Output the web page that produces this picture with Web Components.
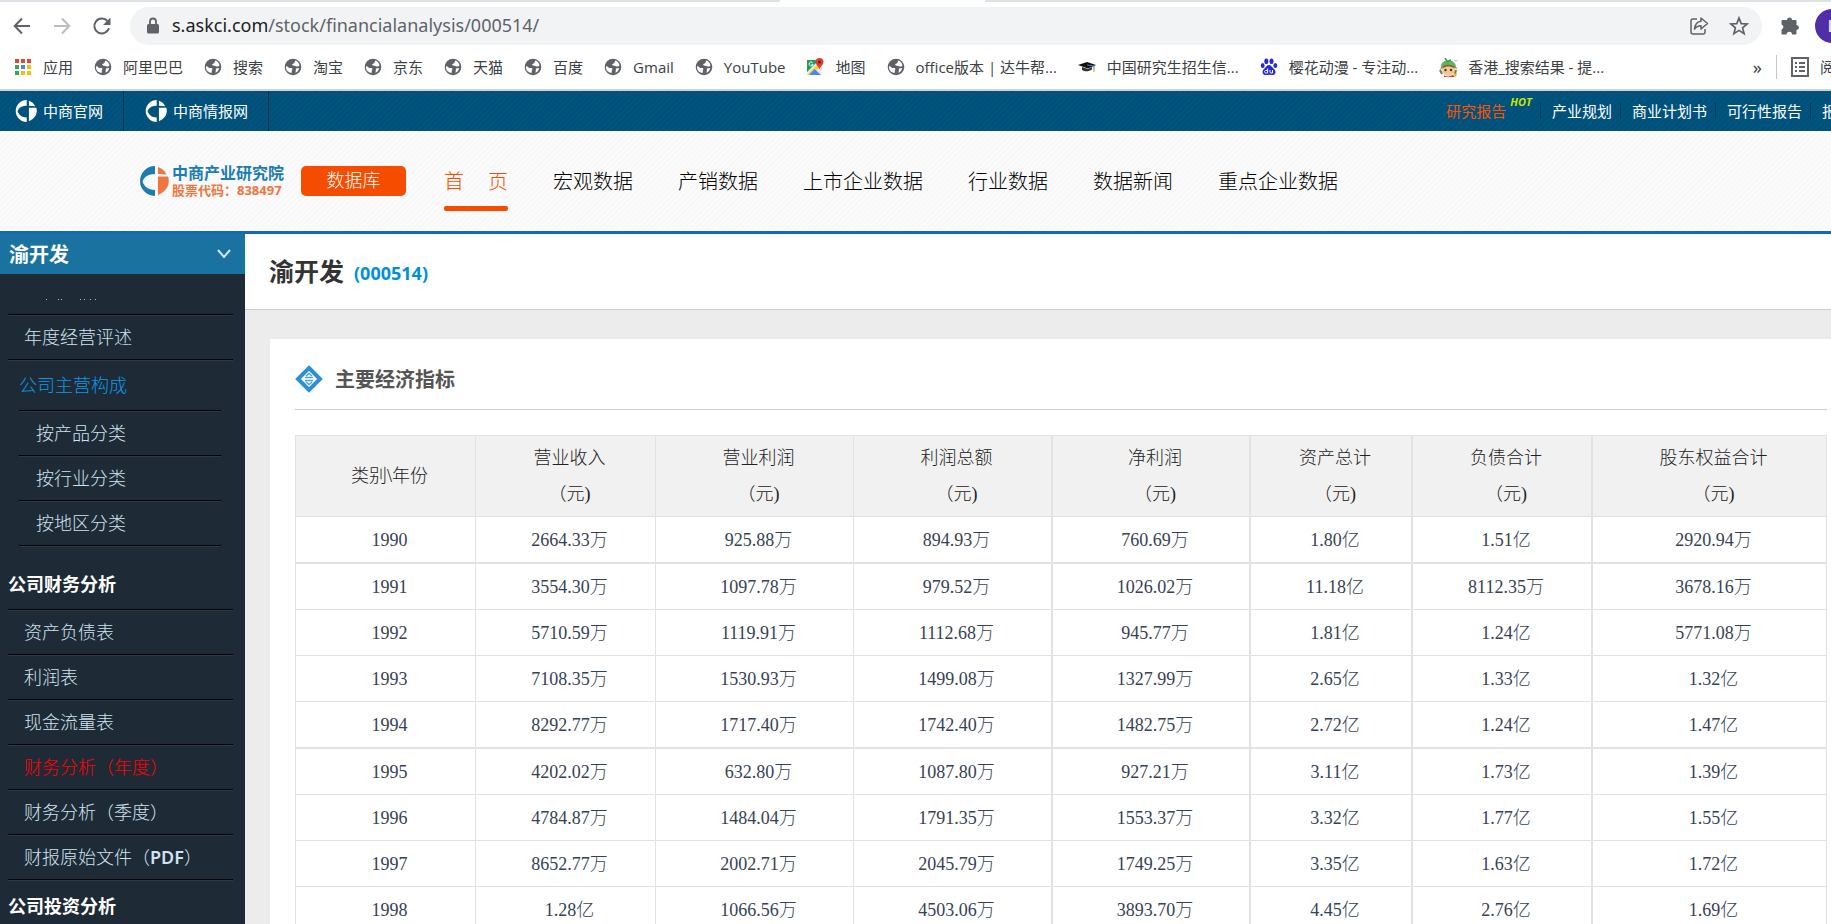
<!DOCTYPE html>
<html lang="zh-CN">
<head>
<meta charset="utf-8">
<title>渝开发（000514）财务分析</title>
<style>
html, body { margin: 0; height: 100%; }
body { font-family: "Noto Sans", "Noto Sans CJK SC", sans-serif; overflow: hidden; background: #ececec; }
</style>
</head>
<body>
<stock-page></stock-page>
<script>
const define = (name, html, setup) => {
  const template = document.createElement('template');
  template.innerHTML = html;
  customElements.define(name, class extends HTMLElement {
    connectedCallback() {
      if (this.shadowRoot) return;
      this.attachShadow({ mode: 'open' }).append(template.content.cloneNode(true));
      if (setup) setup(this, this.shadowRoot);
    }
  });
};

const icons = {
  globe: '<svg viewBox="0 0 18 18" width="18" height="18"><circle cx="9" cy="9" r="8.3" fill="#5f6368"/><path d="M2 8.2C3.4 8 4.5 9 5 10h2.6c1 .3 1 1.500.2 2v2.800C4 14.800 1.700 12 2 8.200ZM11.500 2.500c2 .8 3.600 2.600 4 5-.8 1.300-2.200 1.300-3.400.8-1-.6-2.700-.3-3.900-1.300 0-1.200.6-1.500 1.800-1.600.8-.4.500-2 1.500-2.900ZM12 10.500l3.200-.6c-.4 2.300-1.700 4-3.700 4.800Z" fill="#fff"/></svg>',
  apps: '<svg viewBox="0 0 18 18" width="18" height="18"><g fill="#ea4335"><path d="M1 1h4v4H1zM7 1h4v4H7zM13 1h4v4h-4z"/></g><path d="M1 7h4v4H1zM1 13h4v4H1z" fill="#34a853"/><path d="M7 7h4v4H7z" fill="#4285f4"/><path d="M13 7h4v4h-4zM7 13h4v4H7zM13 13h4v4h-4z" fill="#fbbc04"/></svg>',
  map: '<svg viewBox="0 0 18 18" width="18" height="18"><path d="M1 2h15v15H1z" fill="#e8eaed"/><path d="M1 2h12L1 14z" fill="#1e9d57"/><path d="M1 17 14 4l2 3-10 10z" fill="#fdd030"/><path d="m3 17 5.500-6L15 17z" fill="#4a89f3"/><path d="M13.500 0c2.400 0 4 1.700 4 3.900 0 2.500-3 4-4 7.600-1-3.600-4-5.100-4-7.600 0-2.200 1.600-3.900 4-3.900Z" fill="#e33b2e"/><circle cx="13.500" cy="4" r="1.500" fill="#8c1712"/><path d="M6.500 4.500a2 2 0 1 0 .6 1.800H5.400" fill="none" stroke="#fff"/></svg>',
  hat: '<svg viewBox="0 0 18 18" width="18" height="18"><path d="m0 7 9-3 9 3-8 3.500z" fill="#111"/><path d="M4 9v3c3 2 7 1.500 10-.5V9l-4 2z" fill="#333"/><path d="M9 7l7 1v4" fill="none" stroke="#3b82d0"/><path d="M16 11v3" stroke="#e8c34a" stroke-width="1.500"/></svg>',
  paw: '<svg viewBox="0 0 18 18" width="18" height="18" fill="#2529d8"><ellipse cx="6.300" cy="3.200" rx="2" ry="2.800"/><ellipse cx="11.500" cy="3.200" rx="2" ry="2.800"/><ellipse cx="2.700" cy="7.500" rx="1.900" ry="2.500"/><ellipse cx="15.300" cy="7.500" rx="1.900" ry="2.500"/><path d="M9 7c2 0 3 2 4.500 3.500 2 2 2.500 3.500 1.500 5.200-1.300 2-3.500 1-6 1s-4.700 1-6-1c-1-1.700-.5-3.200 1.500-5.200C6 9 7 7 9 7Z"/><path d="M7.600 10.500v4.500H6c-2 0-2-2.500 0-2.500h1.600M10 12v2q0 1 1 1h1.500v-3" fill="none" stroke="#fff"/></svg>',
  face: '<svg viewBox="0 0 20 20" width="20" height="20"><circle cx="9.500" cy="11.500" r="6.500" fill="#f0c796"/><path d="M2 9C2 4 6 2 9 3c4-1 7 1 8 5l1 3-3-1q-6-3-11 0l-3 2z" fill="#5fb45f"/><path d="m6 0 2.500 3.500L12 2" fill="none" stroke="#3c9d53" stroke-width="1.500"/><path d="M4 9q5-3 11 0" stroke="#b5482f" stroke-width="1.500" fill="none"/><circle cx="6.500" cy="12" r="1.200" fill="#553224"/><circle cx="12" cy="12" r="1.200" fill="#553224"/><path d="M1 12l2 4M17 12l-1 4" stroke="#9c6a3e" stroke-width="2"/><path d="M5 17.500q5 2 9-.5l2 2H5z" fill="#c83a2a"/><path d="m14 16 4-1-1 4z" fill="#e0b430"/><path d="m15.500 2 1.500 1.500L18.500 2" stroke="#f09a8a" fill="none"/></svg>'
};

const whiteMark = '<svg viewBox="0 0 30 30" width="22" height="22" fill="#fff"><path d="M16 0v8C9 8 5 11 3.500 15.500 5 20 9 24 16 24v6A15 15 0 0 1 16 0ZM19 1q6 2 8.500 7.500L19 8zM19 10.500h10q2 6-1 11-3 5-9 7.500z"/></svg>';

/* Browser toolbar: navigation buttons, address box, profile */
define('browser-toolbar', `
<style>
:host { display: block; background: #fff; }
.strip { height: 2px; display: grid; grid-template-columns: 780fr 205fr 846fr; }
.strip i { background: #dee1e6; } .strip i:nth-child(2) { background: #fff; }
.row { display: flex; align-items: center; height: 48px; box-sizing: border-box; padding: 0 0 0 12px; }
button { border: 0; background: none; padding: 0; width: 20px; height: 20px; margin-right: 20px; flex: none; }
svg { display: block; }
.omni { flex: 1; display: flex; align-items: center; height: 38px; margin-left: -2px; padding: 0 13px 0 16px; border-radius: 19px; background: #f1f3f4; }
.omni .url { flex: 1; font-size: 18px; line-height: 24px; color: #5f6368; margin-left: 12px; padding-bottom: 2px; }
.omni b { font-weight: 400; color: #202124; }
.omni button { margin: 0 0 0 20px; }
.row .ext { margin: 0 15px 0 18px; }
.row .avatar { width: 34px; height: 34px; border-radius: 50%; background: #512da8; color: #fff; font: 17px/34px "Noto Sans", sans-serif; margin: 0 -18px 0 0; }
</style>
<div class="strip"><i></i><i></i><i></i></div>
<div class="row">
<button aria-label="后退"><svg viewBox="0 0 20 20" width="20" height="20" fill="none" stroke="#5f6368" stroke-width="2"><path d="M18 10H3M10 2.500 2.700 10l7.300 7.500"/></svg></button>
<button aria-label="前进"><svg viewBox="0 0 20 20" width="20" height="20" fill="none" stroke="#babcbe" stroke-width="2"><path d="M2 10h15M10 2.500 17.300 10 10 17.500"/></svg></button>
<button aria-label="重新加载"><svg viewBox="0 0 20 20" width="20" height="20"><path d="M17 12.300A7.500 7.500 0 1 1 15.500 5" fill="none" stroke="#5f6368" stroke-width="2"/><path d="M18.500 1.500V9H11z" fill="#5f6368"/></svg></button>
<div class="omni">
<svg viewBox="0 0 14 18" width="14" height="18"><rect x="1" y="7" width="12" height="9.500" rx="1.500" fill="#5f6368"/><path d="M4 8V4.500a3 3 0 0 1 6 0V8" fill="none" stroke="#5f6368" stroke-width="1.800"/></svg>
<span class="url"><b>s.askci.com</b>/stock/financialanalysis/000514/</span>
<button aria-label="分享"><svg viewBox="0 0 20 20" width="20" height="20" fill="none" stroke="#5f6368" stroke-width="1.500" stroke-linejoin="round"><path d="M8 3H4a2 2 0 0 0-2 2v11a2 2 0 0 0 2 2h10a2 2 0 0 0 2-2v-3M12 2l6.500 5.500L12 13v-3.300c-3 0-5 1-6.500 3.500C6 8.500 8 5.500 12 5.200z"/></svg></button>
<button aria-label="收藏"><svg viewBox="0 0 20 20" width="20" height="20" fill="none" stroke="#5f6368" stroke-width="1.700"><path d="m10 2 2.200 5.600 6 .4-4.600 3.900 1.500 5.800L10 14.400l-5.100 3.300 1.500-5.800L1.800 8l6-.4z"/></svg></button>
</div>
<button class="ext" aria-label="扩展程序"><svg viewBox="0 0 20 20" width="20" height="20" fill="#5f6368"><path d="M7 4a2.500 2.500 0 0 1 5 0h3.500a1 1 0 0 1 1 1v4a2.500 2.500 0 0 1 0 5v3.500a1 1 0 0 1-1 1H12a2.700 2.700 0 0 0-5.400 0H2.500a1 1 0 0 1-1-1v-4a2.600 2.600 0 0 0 0-5V5a1 1 0 0 1 1-1z"/></svg></button>
<button class="avatar">L</button>
</div>`);

define('bookmark-link', `
<style>
:host { display: block; flex: none; }
a { display: flex; align-items: center; gap: 11px; color: #3c4043; text-decoration: none; font-size: 15px; line-height: 20px; white-space: nowrap; }
.i { width: 18px; height: 18px; display: grid; place-items: center; } svg { display: block; flex: none; }
</style><a href="#"><span class="i"></span><slot></slot></a>`, (el, root) => {
  root.querySelector('.i').innerHTML = icons[el.getAttribute('icon') || 'globe'];
});

define('bookmark-bar', `
<style>
:host { display: flex; align-items: center; gap: 21px; height: 34px; padding: 0 0 5px 14px; background: #fff; border-bottom: 2px solid #d2d3d4; overflow: hidden; font-family: "Open Sans", "Noto Sans CJK SC", sans-serif; }
.end { margin-left: auto; display: flex; align-items: center; gap: 14px; flex: none; margin-right: -19px; color: #3c4043; }
.end i { width: 1px; height: 24px; background: #c4c7ca; }
button { border: 0; background: none; padding: 0; font: 18px/20px "Noto Sans", sans-serif; color: #3c4043; }
.read { display: flex; align-items: center; gap: 11px; font: 15px/20px "Noto Sans", "Noto Sans CJK SC", sans-serif; }
</style>
<bookmark-link icon="apps">应用</bookmark-link><bookmark-link>阿里巴巴</bookmark-link><bookmark-link>搜索</bookmark-link><bookmark-link>淘宝</bookmark-link><bookmark-link>京东</bookmark-link><bookmark-link>天猫</bookmark-link><bookmark-link>百度</bookmark-link><bookmark-link>Gmail</bookmark-link><bookmark-link>YouTube</bookmark-link><bookmark-link icon="map">地图</bookmark-link><bookmark-link>office版本 | 达牛帮...</bookmark-link><bookmark-link icon="hat">中国研究生招生信...</bookmark-link><bookmark-link icon="paw">樱花动漫 - 专注动...</bookmark-link><bookmark-link icon="face">香港_搜索结果 - 提...</bookmark-link>
<div class="end"><button aria-label="更多书签">»</button><i></i><button class="read"><svg viewBox="0 0 18 20" width="18" height="20" fill="none" stroke="#5f6368" stroke-width="2"><path d="M1 1h16v18H1zM4 6h2M8 6h6M4 10h2M8 10h6M4 14h2M8 14h6"/></svg>阅读</button></div>`);

define('site-topbar', `
<style>
:host { display: flex; height: 40px; background: repeating-linear-gradient(135deg, #00507a 0 2px, #00547e 2px 4px); color: #fff; overflow: hidden; font-size: 15px; line-height: 38px; white-space: nowrap; }
a { color: inherit; text-decoration: none; }
.l a { display: flex; align-items: center; gap: 6px; padding: 0 20px 0 21px; border-right: 1px solid #00314c; }
.l a:first-child { padding-left: 15px; }
.l, .r { display: flex; }
.r { margin-left: auto; margin-right: -59px; align-items: center; line-height: 20px; flex: none; padding-bottom: 1px; }
.r a { padding: 0 8px 0 11px; border-left: 1px solid #003a59; height: 16px; display: flex; align-items: center; }
.r .hot { border: 0; color: #ff5200; }
sup { font: italic 700 11px/11px "Open Sans", sans-serif; color: #c8e600; margin: 0 0 18px 4px; }
</style>
<div class="l"><a href="#">${whiteMark}中商官网</a><a href="#">${whiteMark}中商情报网</a></div>
<nav class="r"><a class="hot" href="#">研究报告<sup>HOT</sup></a><a href="#">产业规划</a><a href="#">商业计划书</a><a href="#">可行性报告</a><a href="#">报告大厅</a></nav>`);

define('site-header', `
<style>
:host { display: flex; align-items: center; height: 100px; padding-left: 139px; background: repeating-linear-gradient(135deg, #f8f8f8 0 2px, #fbfbfb 2px 4px); border-bottom: 3px solid #0f6ab8; white-space: nowrap; }
a { text-decoration: none; color: #000; }
.logo { display: flex; align-items: center; gap: 3px; width: 162px; color: #1c7cb0; font: 700 16px/18px "Noto Sans CJK SC", sans-serif; }
.logo small { display: block; font: 700 13px/18px "Noto Sans", "Noto Sans CJK SC", sans-serif; color: #f07540; }
.db { width: 105px; height: 30px; box-sizing: border-box; border-radius: 5px; background: #f54c00; color: #fff; text-align: center; font-size: 18px; line-height: 28px; font-weight: 300; }
nav { display: flex; gap: 45px; margin-left: 38px; padding-top: 2px; font-size: 20px; line-height: 30px; }
nav a { position: relative; font-weight: 300; }
nav .on { color: #f54c00; display: flex; gap: 24px; }
nav .on::after { content: ""; position: absolute; left: 0; right: 0; top: 39px; height: 5px; border-radius: 2px; background: #f54c00; }
</style>
<a class="logo" href="#"><svg viewBox="0 0 30 30" width="30" height="30"><path d="M16 0v8C9 8 5 11 3.500 15.500 5 20 9 24 16 24v6A15 15 0 0 1 16 0Z" fill="#1c7cb0"/><path d="M19 1q6 2 8.500 7.500L19 8zM19 10.500h10q2 6-1 11-3 5-9 7.500z" fill="#f07540"/></svg><span>中商产业研究院<small>股票代码：838497</small></span></a>
<a class="db" href="#">数据库</a>
<nav><a class="on" href="#"><span>首</span><span>页</span></a><a href="#">宏观数据</a><a href="#">产销数据</a><a href="#">上市企业数据</a><a href="#">行业数据</a><a href="#">数据新闻</a><a href="#">重点企业数据</a></nav>`);

define('side-item', `
<style>
:host { display: block; height: 44px; margin: 0 12px 0 8px; border-bottom: 1px solid #000; box-shadow: 0 1px #2a3b49; }
a { display: block; padding-left: 16px; font-size: 18px; line-height: 44px; font-weight: 300; color: #cfe2f1; text-decoration: none; white-space: nowrap; }
::slotted(b) { font-weight: 600; }
:host([current]) a { color: #f00; }
:host([sub]) { margin: 0 24px 0 19px; } :host([sub]) a { padding-left: 17px; }
:host([group]) { margin: 0 24px 0 19px; height: 50px; } :host([group]) a { padding-left: 0; line-height: 50px; color: #0b98ea; }
</style><a href="#"><slot></slot></a>`);

define('side-nav', `
<style>
:host { display: block; background: #1e2b36; overflow: hidden; }
.top { display: flex; justify-content: space-between; align-items: center; width: 100%; height: 40px; border: 0; padding: 0 14px 0 9px; background: #1a72a0; color: #fff; font: 700 20px/38px "Noto Sans CJK SC", sans-serif; }
.cut { height: 40px; margin: 0 12px 0 8px; border-bottom: 1px solid #000; box-shadow: 0 1px #2a3b49; }
.cut svg { display: block; }
h3 { margin: 0; padding-left: 8px; font: 700 18px/24px "Noto Sans CJK SC", sans-serif; color: #fff; }
.a { padding: 25px 0 0; height: 38px; border-bottom: 1px solid #000; margin: 0 12px 0 8px; box-shadow: 0 1px #2a3b49; }
.b { padding-top: 13px; }
</style>
<button class="top">渝开发<svg viewBox="0 0 14 10" width="14" height="10" fill="none" stroke="#d5e8f2" stroke-width="2"><path d="m1 1 6 7 6-7"/></svg></button>
<div class="cut"><svg viewBox="0 0 100 40" width="100" height="40" fill="#a9bccb"><path d="M38 25h1v1h-1zM50 25h1v1h-1zM53 25h1v1h-1zM72 25h1v1h-1zM76 25h1v1h-1zM82 25h1v1h-1zM87 25h1v1h-1z"/></svg></div>
<side-item>年度经营评述</side-item><side-item group>公司主营构成</side-item><side-item sub>按产品分类</side-item><side-item sub>按行业分类</side-item><side-item sub>按地区分类</side-item>
<h3 class="a">公司财务分析</h3>
<side-item>资产负债表</side-item><side-item>利润表</side-item><side-item>现金流量表</side-item><side-item current>财务分析（年度）</side-item><side-item>财务分析（季度）</side-item><side-item>财报原始文件（<b>PDF</b>）</side-item>
<h3 class="b">公司投资分析</h3>`);

const heads = ['营业收入', '营业利润', '利润总额', '净利润', '资产总计', '负债合计', '股东权益合计'];
const rows = `1990 2664.33万 925.88万 894.93万 760.69万 1.80亿 1.51亿 2920.94万
1991 3554.30万 1097.78万 979.52万 1026.02万 11.18亿 8112.35万 3678.16万
1992 5710.59万 1119.91万 1112.68万 945.77万 1.81亿 1.24亿 5771.08万
1993 7108.35万 1530.93万 1499.08万 1327.99万 2.65亿 1.33亿 1.32亿
1994 8292.77万 1717.40万 1742.40万 1482.75万 2.72亿 1.24亿 1.47亿
1995 4202.02万 632.80万 1087.80万 927.21万 3.11亿 1.73亿 1.39亿
1996 4784.87万 1484.04万 1791.35万 1553.37万 3.32亿 1.77亿 1.55亿
1997 8652.77万 2002.71万 2045.79万 1749.25万 3.35亿 1.63亿 1.72亿
1998 1.28亿 1066.56万 4503.06万 3893.70万 4.45亿 2.76亿 1.69亿`.split('\n').map(r => r.split(' '));

define('finance-table', `
<style>
:host { display: block; }
table { width: 100%; table-layout: fixed; border-collapse: separate; border-spacing: 0; border: solid #e2e2e2; border-width: 1px 0 0 1px; font-family: "Liberation Serif", "Noto Sans CJK SC", serif; font-size: 18px; color: #364254; text-align: center; }
th, td { box-sizing: border-box; padding: 0 0 0 8px; border: solid #e2e2e2; border-width: 0 1px 1px 0; font-weight: 300; }
th { height: 81px; background: #f1f1f1; color: #222; line-height: 36px; }
td { height: 46px; line-height: 44px; }
tbody tr:nth-child(4n+1) td { height: 47px; border-bottom-width: 2px; }
:is(th, td):nth-child(n+4):nth-child(-n+7) { border-right-width: 2px; }
</style>
<table><colgroup></colgroup><thead><tr></tr></thead><tbody></tbody></table>`, (el, root) => {
  root.querySelector('colgroup').innerHTML = [180, 180, 198, 199, 198, 162, 180, 234].map(w => `<col style="width:calc(100% * ${w} / 1531)">`).join('');
  root.querySelector('thead tr').innerHTML = '<th scope="col">类别\\年份</th>' + heads.map(h => `<th scope="col">${h}<br>（元)</th>`).join('');
  root.querySelector('tbody').innerHTML = rows.map(r => `<tr>${r.map(c => `<td>${c}</td>`).join('')}</tr>`).join('');
});

define('stock-content', `
<style>
:host { display: block; background: #ececec; min-width: 0; }
header { height: 75px; display: flex; align-items: center; gap: 10px; padding-left: 24px; background: #fff; border-bottom: 1px solid #ccc; }
h1 { margin: 0; padding-bottom: 4px; font: 700 25px/30px "Noto Sans CJK SC", sans-serif; color: #333; }
header span { padding-top: 2px; font-size: 18px; line-height: 24px; font-weight: 700; color: #0090d7; }
section { margin: 29px 0 0 25px; padding: 0 4px 0 25px; background: #fff; }
.t { display: flex; align-items: center; gap: 12px; height: 71px; padding-top: 9px; box-sizing: border-box; margin-bottom: 25px; border-bottom: 1px solid #ccc; }
.t svg { display: block; }
h2 { margin: 0; font: 700 20px/30px "Noto Sans CJK SC", sans-serif; color: #555; }
</style>
<header><h1>渝开发</h1><span>(000514)</span></header>
<section><div class="t"><svg viewBox="0 0 28 28" width="28" height="28"><path d="M14 3 25 14 14 25 3 14z" fill="#fff" stroke="#2b90d6" stroke-width="4"/><path d="M10 12.500h8M10 15.500h8M11 11l3-2.500 3 2.500M11 17l3 2.500 3-2.500" fill="none" stroke="#4ca3de" stroke-width="1.500"/></svg><h2>主要经济指标</h2></div><finance-table></finance-table></section>`);

define('stock-page', `
<style>
:host { display: flex; flex-direction: column; height: 100vh; overflow: hidden; }
browser-toolbar, bookmark-bar, site-topbar, site-header { flex: none; }
main { flex: 1; min-height: 0; display: grid; grid-template-columns: 245px minmax(0, 1fr); overflow: hidden; }
</style>
<browser-toolbar></browser-toolbar><bookmark-bar></bookmark-bar><site-topbar></site-topbar><site-header></site-header>
<main><side-nav></side-nav><stock-content></stock-content></main>`);
</script>
</body>
</html>
